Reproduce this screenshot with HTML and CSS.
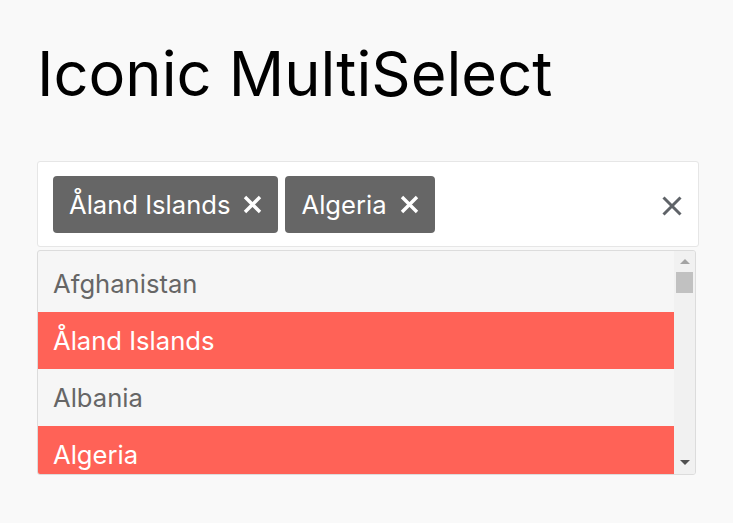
FILE: index.html
```html
<!DOCTYPE html>
<html>
<head>
<meta charset="utf-8">
<link rel="stylesheet" href="styles.css">
</head>
<body>
<main class="page">
  <h1 class="title">Iconic MultiSelect</h1>
  <div class="select">
    <div class="tags">
      <span class="tag">Åland Islands <svg class="tag-x" viewBox="0 0 19 19"><path d="M2 2L17 17M17 2L2 17"/></svg></span>
      <span class="tag">Algeria <svg class="tag-x" viewBox="0 0 19 19"><path d="M2 2L17 17M17 2L2 17"/></svg></span>
    </div>
    <svg class="clear" viewBox="0 0 20 20"><path d="M1.5 1.5L18.5 18.5M18.5 1.5L1.5 18.5"/></svg>
  </div>
  <div class="dropdown">
    <ul class="options">
      <li class="option">Afghanistan</li>
      <li class="option selected">Åland Islands</li>
      <li class="option">Albania</li>
      <li class="option selected">Algeria</li>
    </ul>
    <div class="scrollbar">
      <span class="arrow up"></span>
      <span class="thumb"></span>
      <span class="spacer"></span>
      <span class="arrow down"></span>
    </div>
  </div>
</main>
</body>
</html>
```
FILE: styles.css
```css
html, body {
  margin: 0;
  padding: 0;
  background: #f9f9f9;
}
body {
  font-family: Inter, "Noto Sans", sans-serif;
}
.page {
  padding: 37px 37px 0 37px;
  width: 662px;
}
.title {
  margin: 0 0 50px 0;
  font-size: 61.4px;
  font-weight: 400;
  line-height: 74px;
  color: #000;
}
.select {
  box-sizing: border-box;
  width: 662px;
  height: 86px;
  background: #fff;
  border: 1px solid #e6e6e6;
  border-radius: 3px;
  padding: 14px 16px 0 15px;
  display: flex;
  align-items: flex-start;
  justify-content: space-between;
}
.tags {
  display: flex;
  gap: 7px;
}
.tag {
  display: flex;
  align-items: center;
  gap: 13px;
  height: 57px;
  box-sizing: border-box;
  padding: 0 16px 0 16px;
  background: #666;
  color: #fff;
  border-radius: 4px;
  font-size: 25.6px;
}
.tag-x {
  width: 19px;
  height: 19px;
  fill: none;
  stroke: #fff;
  stroke-width: 3.4;
}
.clear {
  width: 20px;
  height: 20px;
  margin-top: 20px;
  fill: none;
  stroke: #5f6368;
  stroke-width: 3;
}
.dropdown {
  box-sizing: border-box;
  margin-top: 3px;
  width: 659px;
  height: 225px;
  border: 1px solid #dcdcdc;
  border-radius: 3px;
  background: #f6f6f6;
  display: flex;
  overflow: hidden;
}
.options {
  list-style: none;
  margin: 0;
  padding: 4px 0 0 0;
  flex: 1;
  overflow: hidden;
}
.option {
  height: 57px;
  line-height: 57px;
  padding-left: 15px;
  font-size: 25.6px;
  color: #666;
}
.option.selected {
  background: #ff6257;
  color: #fff;
}
.scrollbar {
  width: 21px;
  background: #f1f1f1;
  display: flex;
  flex-direction: column;
  align-items: center;
}
.arrow {
  width: 0;
  height: 0;
  border-left: 5px solid transparent;
  border-right: 5px solid transparent;
}
.arrow.up {
  margin-top: 8px;
  border-bottom: 5px solid #a3a3a3;
}
.arrow.down {
  margin-bottom: 9px;
  border-top: 5px solid #505050;
}
.thumb {
  margin-top: 8px;
  width: 17px;
  height: 21px;
  background: #c1c1c1;
}
.spacer {
  flex: 1;
}
```
